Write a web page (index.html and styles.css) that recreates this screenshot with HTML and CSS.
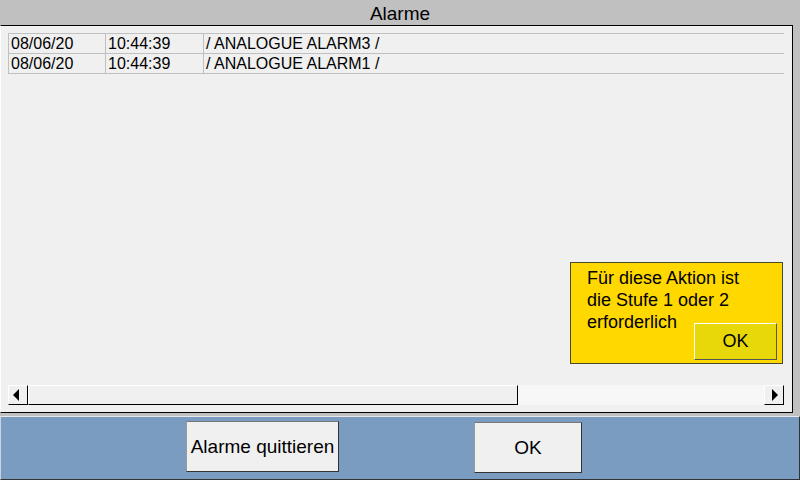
FILE: index.html
```html
<!DOCTYPE html>
<html>
<head>
    <link rel="stylesheet" href="styles.css">
</head>
<body>
    <div class="title">Alarme</div>

    <div class="panel">
        <table class="alarms">
            <tr><td class="c-date">08/06/20</td><td class="c-time">10:44:39</td><td>/ ANALOGUE ALARM3 /</td></tr>
            <tr><td class="c-date">08/06/20</td><td class="c-time">10:44:39</td><td>/ ANALOGUE ALARM1 /</td></tr>
        </table>

        <div class="spacer"></div>

        <div class="hscroll">
            <div class="arrow left"><span class="tri-left"></span></div>
            <div class="thumb"></div>
            <div class="track"></div>
            <div class="arrow right"><span class="tri-right"></span></div>
        </div>

        <div class="notice">
            <div class="notice-text">Für diese Aktion ist<br>die Stufe 1 oder 2<br>erforderlich</div>
            <button class="notice-ok">OK</button>
        </div>
    </div>

    <div class="footer">
        <button class="btn btn-ack">Alarme quittieren</button>
        <button class="btn btn-ok">OK</button>
    </div>
</body>
</html>
```

FILE: styles.css
```css
body {
    margin: 0;
    padding: 0;
    width: 800px;
    height: 480px;
    background: #c0c0c0;
    font-family: "Liberation Sans", Arial, sans-serif;
    display: flex;
    flex-direction: column;
    overflow: hidden;
}

.title {
    height: 25px;
    line-height: 27px;
    text-align: center;
    font-size: 19px;
    color: #000;
}

.panel {
    position: relative;
    width: 793px;
    height: 388px;
    background: #f0f0f0;
    border: 1px solid #000;
    border-left-color: #fff;
    display: flex;
    flex-direction: column;
    padding: 7px 8px 7px 7px;
    box-sizing: border-box;
}

.alarms {
    width: 776px;
    border-collapse: collapse;
    font-size: 16px;
    color: #000;
}

.alarms td {
    height: 19px;
    padding: 0 0 0 2px;
    border-top: 1px solid #c0c0c0;
    border-bottom: 1px solid #c0c0c0;
    line-height: 18px;
    white-space: nowrap;
}

.alarms td.c-date {
    width: 94px;
    border-left: 1px solid #c0c0c0;
    border-right: 1px solid #c0c0c0;
}

.alarms td.c-time {
    width: 95px;
    border-right: 1px solid #c0c0c0;
}

.spacer {
    flex: 1;
}

.hscroll {
    height: 20px;
    width: 776px;
    display: flex;
    background: #f7f7f7;
}

.arrow {
    width: 18px;
    height: 18px;
    background: #f0f0f0;
    border-top: 1px solid #fff;
    border-left: 1px solid #fff;
    border-bottom: 1px solid #000;
    border-right: 1px solid #000;
    display: flex;
    align-items: center;
    justify-content: center;
}

.tri-left {
    width: 0;
    height: 0;
    border-top: 6px solid transparent;
    border-bottom: 6px solid transparent;
    border-right: 6px solid #000;
    margin-left: -4px;
}

.tri-right {
    width: 0;
    height: 0;
    border-top: 6px solid transparent;
    border-bottom: 6px solid transparent;
    border-left: 6px solid #000;
    margin-left: 2px;
}

.thumb {
    width: 488px;
    height: 18px;
    background: #f0f0f0;
    border-top: 1px solid #fff;
    border-left: 1px solid #fff;
    border-bottom: 1px solid #000;
    border-right: 1px solid #000;
}

.track {
    flex: 1;
}

.notice {
    position: absolute;
    left: 569px;
    top: 236px;
    width: 211px;
    height: 100px;
    background: #ffd800;
    border: 1px solid #4a4a30;
    font-size: 18px;
    color: #000;
}

.notice-text {
    padding: 4px 0 0 16px;
    line-height: 22px;
}

.notice-ok {
    position: absolute;
    left: 123px;
    top: 60px;
    width: 83px;
    height: 37px;
    background: #e8d80a;
    border: 1px solid #555;
    border-top-color: #fff;
    border-left-color: #fff;
    font-family: "Liberation Sans", Arial, sans-serif;
    font-size: 18px;
    color: #000;
    padding: 0;
}

.footer {
    margin-top: 3px;
    flex: 1;
    background: #7b9cc1;
    border-top: 1px solid #e8e8e8;
    border-left: 1px solid #c8d4e4;
    border-bottom: 1px solid #333;
    border-right: 1px solid #333;
    display: flex;
    align-items: flex-start;
    padding: 4px 0 0 185px;
}

.btn {
    height: 51px;
    background: #f0f0f0;
    border: 1px solid #333;
    border-top-color: #777;
    border-left-color: #999;
    font-family: "Liberation Sans", Arial, sans-serif;
    font-size: 19px;
    color: #000;
    padding: 0;
}

.btn-ack {
    width: 153px;
}

.btn-ok {
    width: 108px;
    margin-left: 135px;
    margin-top: 1px;
}
```
